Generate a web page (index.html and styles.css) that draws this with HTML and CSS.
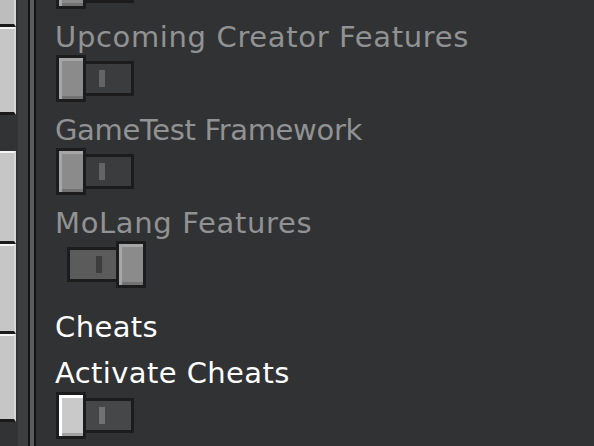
FILE: index.html
```html
<!DOCTYPE html>
<html lang="en">
<head>
<meta charset="utf-8">
<title>Experiments</title>
<link rel="stylesheet" href="styles.css">
</head>
<body>
<div class="app">
  <aside class="sidebar">
    <div class="tabs">
      <div class="tab tab-first"></div>
      <div class="tab tab-2"></div>
      <div class="tab-gap"></div>
      <div class="tab tab-3"></div>
      <div class="tab tab-4"></div>
      <div class="tab tab-5"></div>
    </div>
    <div class="strip"></div>
    <div class="divider"></div>
  </aside>
  <main class="content">
    <div class="toggle off disabled toggle-top">
      <div class="knob"></div>
      <div class="track"><span class="bar"></span></div>
    </div>
    <div class="label muted wide">Upcoming Creator Features</div>
    <div class="toggle off disabled">
      <div class="knob"></div>
      <div class="track"><span class="bar"></span></div>
    </div>
    <div class="label muted tight">GameTest Framework</div>
    <div class="toggle off disabled">
      <div class="knob"></div>
      <div class="track"><span class="bar"></span></div>
    </div>
    <div class="label muted wide">MoLang Features</div>
    <div class="toggle on disabled">
      <div class="track"><span class="bar"></span></div>
      <div class="knob"></div>
    </div>
    <div class="label heading">Cheats</div>
    <div class="label bright activate">Activate Cheats</div>
    <div class="toggle off enabled toggle-last">
      <div class="knob"></div>
      <div class="track"><span class="bar"></span></div>
    </div>
  </main>
</div>
</body>
</html>
```
FILE: styles.css
```css
html, body {
  margin: 0;
  padding: 0;
  height: 446px;
  overflow: hidden;
  background: #313233;
}

.app {
  display: flex;
  height: 446px;
}

.sidebar {
  display: flex;
  flex: 0 0 36px;
  height: 446px;
}

.tabs {
  width: 18px;
  background: #323334;
  display: flex;
  flex-direction: column;
}

.tab {
  width: 16px;
  box-sizing: border-box;
  background: #c6c6c6;
  border-top: 2px solid #f4f4f4;
  border-bottom: 3px solid #1a1a1b;
  border-right: 2px solid #d6d6d6;
}

.tab-first { height: 27px; border-top: 0; background: #bdbdbd; }
.tab-2 { height: 88px; }
.tab-gap { height: 36px; }
.tab-3 { height: 93px; }
.tab-4 { height: 90px; }
.tab-5 { height: 88px; }

.strip {
  width: 10px;
  background: #3c3e3f;
}

.divider {
  width: 4px;
  background: #5b5c5e;
  border-left: 2px solid #131314;
  border-right: 2px solid #131314;
}

.content {
  flex: 1;
  display: flex;
  flex-direction: column;
  align-items: flex-start;
  padding-left: 20px;
}

.label {
  font-family: "DejaVu Sans", "Liberation Sans", sans-serif;
  font-size: 29px;
  line-height: 29px;
  height: 29px;
  letter-spacing: 0.4px;
  margin-left: -1px;
  margin-top: 14px;
  white-space: nowrap;
}

.wide { letter-spacing: 0.65px; }
.tight { letter-spacing: -0.35px; }

.muted { color: #919293; }
.heading { color: #ffffff; margin-top: 25px; }
.bright { color: #ffffff; }
.activate { margin-top: 17px; }

.toggle {
  display: flex;
  align-items: center;
  height: 47px;
  margin-top: 3px;
}

.toggle-top { margin-top: -38px; }
.toggle-last { margin-top: 4px; }

.knob {
  position: relative;
  z-index: 1;
  width: 30px;
  height: 47px;
  box-sizing: border-box;
  border: 3px solid #1c1c1d;
}

.track {
  width: 64px;
  height: 35px;
  box-sizing: border-box;
  border: 3px solid #1c1c1d;
  display: flex;
  align-items: center;
  justify-content: center;
}

.bar {
  display: block;
  width: 6px;
  height: 17px;
}

.off .track { margin-left: -16px; }
.on { margin-left: 11px; }
.on .knob { margin-left: -15px; }

.disabled .knob {
  background: #8b8b8b;
  box-shadow: inset 3px 3px 0 #a6a6a6, inset 0 -3px 0 #727272;
}

.disabled.off .track { background: #3b3c3d; }
.disabled.off .bar { background: #646464; }

.disabled.on .track { background: #5b5b5b; }
.disabled.on .bar { background: #3d3d3d; }

.enabled .knob {
  background: #c9c9c9;
  box-shadow: inset 3px 3px 0 #ffffff, inset 0 -3px 0 #a2a2a2;
}

.enabled .track { background: #464748; }
.enabled .bar { background: #727272; }
```
